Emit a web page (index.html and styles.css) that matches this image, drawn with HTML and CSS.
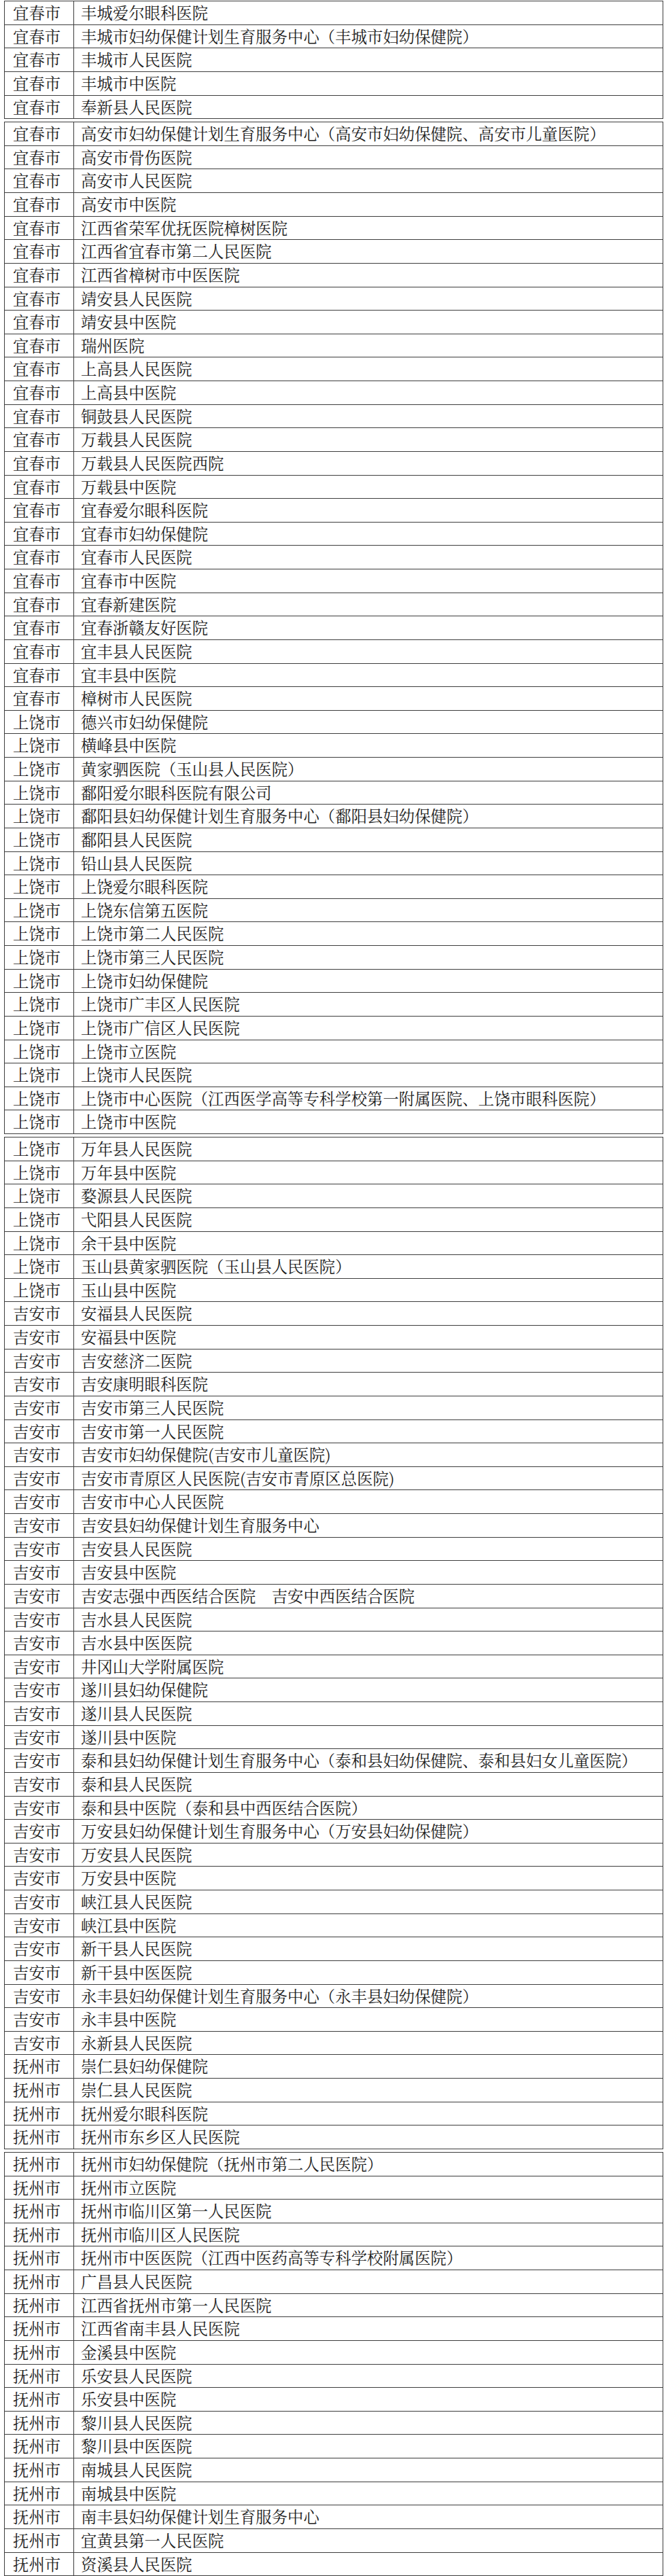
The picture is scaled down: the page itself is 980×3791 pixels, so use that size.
FILE: index.html
```html
<!DOCTYPE html>
<html lang="zh-CN">
<head>
<meta charset="utf-8">
<title>医院名单</title>
<link rel="stylesheet" href="styles.css">
</head>
<body>
<main class="sheet">
<table class="list">
<tr><td class="city">宜春市</td><td class="name">丰城爱尔眼科医院</td></tr>
<tr><td class="city">宜春市</td><td class="name">丰城市妇幼保健计划生育服务中心（丰城市妇幼保健院）</td></tr>
<tr><td class="city">宜春市</td><td class="name">丰城市人民医院</td></tr>
<tr><td class="city">宜春市</td><td class="name">丰城市中医院</td></tr>
<tr><td class="city">宜春市</td><td class="name">奉新县人民医院</td></tr>
</table>
<table class="list">
<tr><td class="city">宜春市</td><td class="name">高安市妇幼保健计划生育服务中心（高安市妇幼保健院、高安市儿童医院）</td></tr>
<tr><td class="city">宜春市</td><td class="name">高安市骨伤医院</td></tr>
<tr><td class="city">宜春市</td><td class="name">高安市人民医院</td></tr>
<tr><td class="city">宜春市</td><td class="name">高安市中医院</td></tr>
<tr><td class="city">宜春市</td><td class="name">江西省荣军优抚医院樟树医院</td></tr>
<tr><td class="city">宜春市</td><td class="name">江西省宜春市第二人民医院</td></tr>
<tr><td class="city">宜春市</td><td class="name">江西省樟树市中医医院</td></tr>
<tr><td class="city">宜春市</td><td class="name">靖安县人民医院</td></tr>
<tr><td class="city">宜春市</td><td class="name">靖安县中医院</td></tr>
<tr><td class="city">宜春市</td><td class="name">瑞州医院</td></tr>
<tr><td class="city">宜春市</td><td class="name">上高县人民医院</td></tr>
<tr><td class="city">宜春市</td><td class="name">上高县中医院</td></tr>
<tr><td class="city">宜春市</td><td class="name">铜鼓县人民医院</td></tr>
<tr><td class="city">宜春市</td><td class="name">万载县人民医院</td></tr>
<tr><td class="city">宜春市</td><td class="name">万载县人民医院西院</td></tr>
<tr><td class="city">宜春市</td><td class="name">万载县中医院</td></tr>
<tr><td class="city">宜春市</td><td class="name">宜春爱尔眼科医院</td></tr>
<tr><td class="city">宜春市</td><td class="name">宜春市妇幼保健院</td></tr>
<tr><td class="city">宜春市</td><td class="name">宜春市人民医院</td></tr>
<tr><td class="city">宜春市</td><td class="name">宜春市中医院</td></tr>
<tr><td class="city">宜春市</td><td class="name">宜春新建医院</td></tr>
<tr><td class="city">宜春市</td><td class="name">宜春浙赣友好医院</td></tr>
<tr><td class="city">宜春市</td><td class="name">宜丰县人民医院</td></tr>
<tr><td class="city">宜春市</td><td class="name">宜丰县中医院</td></tr>
<tr><td class="city">宜春市</td><td class="name">樟树市人民医院</td></tr>
<tr><td class="city">上饶市</td><td class="name">德兴市妇幼保健院</td></tr>
<tr><td class="city">上饶市</td><td class="name">横峰县中医院</td></tr>
<tr><td class="city">上饶市</td><td class="name">黄家驷医院（玉山县人民医院）</td></tr>
<tr><td class="city">上饶市</td><td class="name">鄱阳爱尔眼科医院有限公司</td></tr>
<tr><td class="city">上饶市</td><td class="name">鄱阳县妇幼保健计划生育服务中心（鄱阳县妇幼保健院）</td></tr>
<tr><td class="city">上饶市</td><td class="name">鄱阳县人民医院</td></tr>
<tr><td class="city">上饶市</td><td class="name">铅山县人民医院</td></tr>
<tr><td class="city">上饶市</td><td class="name">上饶爱尔眼科医院</td></tr>
<tr><td class="city">上饶市</td><td class="name">上饶东信第五医院</td></tr>
<tr><td class="city">上饶市</td><td class="name">上饶市第二人民医院</td></tr>
<tr><td class="city">上饶市</td><td class="name">上饶市第三人民医院</td></tr>
<tr><td class="city">上饶市</td><td class="name">上饶市妇幼保健院</td></tr>
<tr><td class="city">上饶市</td><td class="name">上饶市广丰区人民医院</td></tr>
<tr><td class="city">上饶市</td><td class="name">上饶市广信区人民医院</td></tr>
<tr><td class="city">上饶市</td><td class="name">上饶市立医院</td></tr>
<tr><td class="city">上饶市</td><td class="name">上饶市人民医院</td></tr>
<tr><td class="city">上饶市</td><td class="name">上饶市中心医院（江西医学高等专科学校第一附属医院、上饶市眼科医院）</td></tr>
<tr><td class="city">上饶市</td><td class="name">上饶市中医院</td></tr>
</table>
<table class="list">
<tr><td class="city">上饶市</td><td class="name">万年县人民医院</td></tr>
<tr><td class="city">上饶市</td><td class="name">万年县中医院</td></tr>
<tr><td class="city">上饶市</td><td class="name">婺源县人民医院</td></tr>
<tr><td class="city">上饶市</td><td class="name">弋阳县人民医院</td></tr>
<tr><td class="city">上饶市</td><td class="name">余干县中医院</td></tr>
<tr><td class="city">上饶市</td><td class="name">玉山县黄家驷医院（玉山县人民医院）</td></tr>
<tr><td class="city">上饶市</td><td class="name">玉山县中医院</td></tr>
<tr><td class="city">吉安市</td><td class="name">安福县人民医院</td></tr>
<tr><td class="city">吉安市</td><td class="name">安福县中医院</td></tr>
<tr><td class="city">吉安市</td><td class="name">吉安慈济二医院</td></tr>
<tr><td class="city">吉安市</td><td class="name">吉安康明眼科医院</td></tr>
<tr><td class="city">吉安市</td><td class="name">吉安市第三人民医院</td></tr>
<tr><td class="city">吉安市</td><td class="name">吉安市第一人民医院</td></tr>
<tr><td class="city">吉安市</td><td class="name">吉安市妇幼保健院(吉安市儿童医院)</td></tr>
<tr><td class="city">吉安市</td><td class="name">吉安市青原区人民医院(吉安市青原区总医院)</td></tr>
<tr><td class="city">吉安市</td><td class="name">吉安市中心人民医院</td></tr>
<tr><td class="city">吉安市</td><td class="name">吉安县妇幼保健计划生育服务中心</td></tr>
<tr><td class="city">吉安市</td><td class="name">吉安县人民医院</td></tr>
<tr><td class="city">吉安市</td><td class="name">吉安县中医院</td></tr>
<tr><td class="city">吉安市</td><td class="name">吉安志强中西医结合医院　吉安中西医结合医院</td></tr>
<tr><td class="city">吉安市</td><td class="name">吉水县人民医院</td></tr>
<tr><td class="city">吉安市</td><td class="name">吉水县中医医院</td></tr>
<tr><td class="city">吉安市</td><td class="name">井冈山大学附属医院</td></tr>
<tr><td class="city">吉安市</td><td class="name">遂川县妇幼保健院</td></tr>
<tr><td class="city">吉安市</td><td class="name">遂川县人民医院</td></tr>
<tr><td class="city">吉安市</td><td class="name">遂川县中医院</td></tr>
<tr><td class="city">吉安市</td><td class="name">泰和县妇幼保健计划生育服务中心（泰和县妇幼保健院、泰和县妇女儿童医院）</td></tr>
<tr><td class="city">吉安市</td><td class="name">泰和县人民医院</td></tr>
<tr><td class="city">吉安市</td><td class="name">泰和县中医院（泰和县中西医结合医院）</td></tr>
<tr><td class="city">吉安市</td><td class="name">万安县妇幼保健计划生育服务中心（万安县妇幼保健院）</td></tr>
<tr><td class="city">吉安市</td><td class="name">万安县人民医院</td></tr>
<tr><td class="city">吉安市</td><td class="name">万安县中医院</td></tr>
<tr><td class="city">吉安市</td><td class="name">峡江县人民医院</td></tr>
<tr><td class="city">吉安市</td><td class="name">峡江县中医院</td></tr>
<tr><td class="city">吉安市</td><td class="name">新干县人民医院</td></tr>
<tr><td class="city">吉安市</td><td class="name">新干县中医医院</td></tr>
<tr><td class="city">吉安市</td><td class="name">永丰县妇幼保健计划生育服务中心（永丰县妇幼保健院）</td></tr>
<tr><td class="city">吉安市</td><td class="name">永丰县中医院</td></tr>
<tr><td class="city">吉安市</td><td class="name">永新县人民医院</td></tr>
<tr><td class="city">抚州市</td><td class="name">崇仁县妇幼保健院</td></tr>
<tr><td class="city">抚州市</td><td class="name">崇仁县人民医院</td></tr>
<tr><td class="city">抚州市</td><td class="name">抚州爱尔眼科医院</td></tr>
<tr><td class="city">抚州市</td><td class="name">抚州市东乡区人民医院</td></tr>
</table>
<table class="list">
<tr><td class="city">抚州市</td><td class="name">抚州市妇幼保健院（抚州市第二人民医院）</td></tr>
<tr><td class="city">抚州市</td><td class="name">抚州市立医院</td></tr>
<tr><td class="city">抚州市</td><td class="name">抚州市临川区第一人民医院</td></tr>
<tr><td class="city">抚州市</td><td class="name">抚州市临川区人民医院</td></tr>
<tr><td class="city">抚州市</td><td class="name">抚州市中医医院（江西中医药高等专科学校附属医院）</td></tr>
<tr><td class="city">抚州市</td><td class="name">广昌县人民医院</td></tr>
<tr><td class="city">抚州市</td><td class="name">江西省抚州市第一人民医院</td></tr>
<tr><td class="city">抚州市</td><td class="name">江西省南丰县人民医院</td></tr>
<tr><td class="city">抚州市</td><td class="name">金溪县中医院</td></tr>
<tr><td class="city">抚州市</td><td class="name">乐安县人民医院</td></tr>
<tr><td class="city">抚州市</td><td class="name">乐安县中医院</td></tr>
<tr><td class="city">抚州市</td><td class="name">黎川县人民医院</td></tr>
<tr><td class="city">抚州市</td><td class="name">黎川县中医医院</td></tr>
<tr><td class="city">抚州市</td><td class="name">南城县人民医院</td></tr>
<tr><td class="city">抚州市</td><td class="name">南城县中医院</td></tr>
<tr><td class="city">抚州市</td><td class="name">南丰县妇幼保健计划生育服务中心</td></tr>
<tr><td class="city">抚州市</td><td class="name">宜黄县第一人民医院</td></tr>
<tr><td class="city">抚州市</td><td class="name">资溪县人民医院</td></tr>
</table>
</main>
</body>
</html>
```

FILE: styles.css
```css
html, body {
  margin: 0;
  padding: 0;
  background: #ffffff;
}

.sheet {
  display: flex;
  flex-direction: column;
  gap: 4px;
  padding: 1px 0 0 6px;
  width: 970px;
}

.list {
  width: 970px;
  border-collapse: collapse;
  table-layout: fixed;
  font-family: "Noto Serif CJK SC", "Noto Sans CJK SC", serif;
  color: #1e1e1e;
}

.list tr {
  height: 34.63px;
}

.list td {
  border: 1px solid #3c3c3c;
  padding: 0;
  vertical-align: middle;
  white-space: nowrap;
  overflow: hidden;
  font-size: 23.4px;
  line-height: 1;
}

.list .city {
  width: 89px;
  padding-left: 12px;
}

.list .name {
  padding-left: 10px;
}
```
